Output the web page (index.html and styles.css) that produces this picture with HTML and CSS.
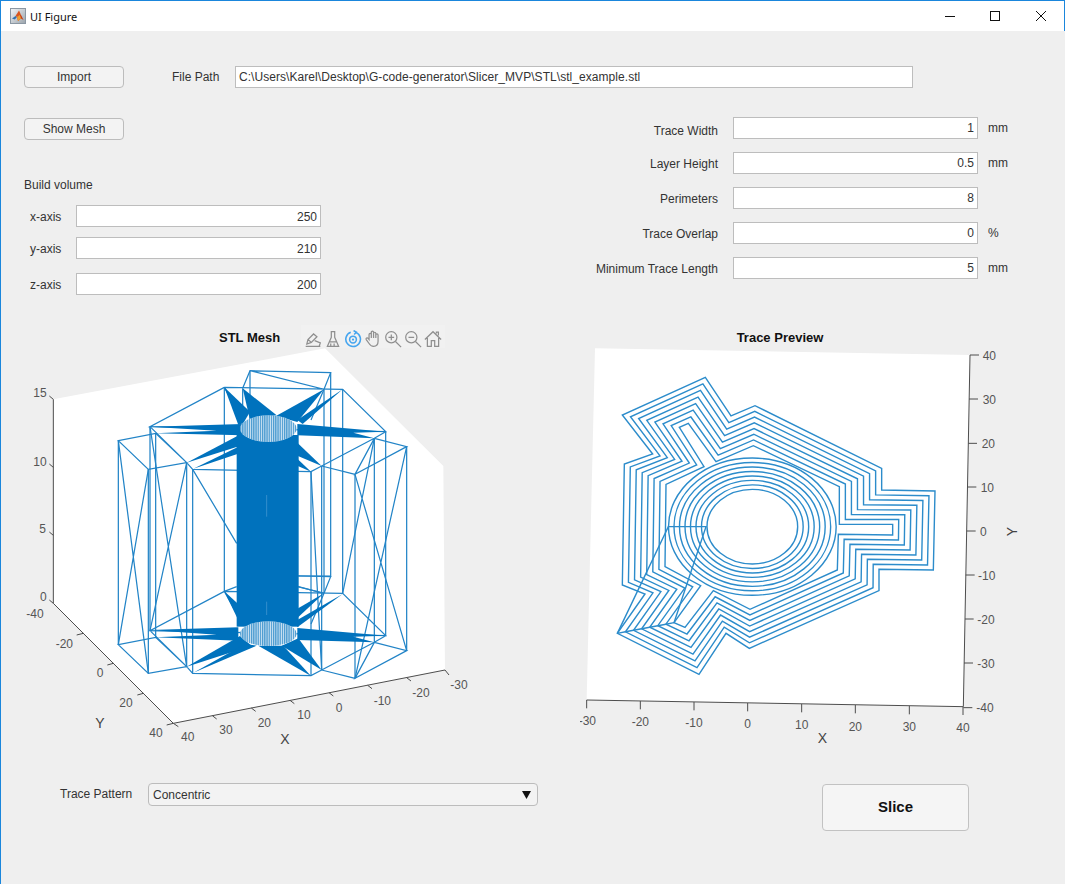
FILE: index.html
```html
<!DOCTYPE html>
<html lang="en">
<head>
<meta charset="utf-8">
<title>UI Figure</title>
<link rel="stylesheet" href="styles.css">
</head>
<body>
<div class="window">
  <header class="titlebar">
    <svg class="app-icon" viewBox="0 0 16 16">
      <defs><linearGradient id="logoBg" x1="0" y1="0" x2="1" y2="1"><stop offset="0" stop-color="#f4f6f8"/><stop offset="1" stop-color="#9aa3ab"/></linearGradient></defs>
      <rect x="0.5" y="0.5" width="15" height="15" fill="url(#logoBg)" stroke="#8b97a3"/>
      <path d="M2 10.5 5.5 8 7 9 4.8 11.5z" fill="#2f6fb0"/>
      <path d="M5.5 8 9 2.5l1.8 4-3.8 2.5z" fill="#d9541e"/>
      <path d="M9 2.5l1.8 4L13.5 12l-2.5-1.5L8 13 7 9l3.8-2.5z" fill="#c43a12"/>
      <path d="M7 9l1 4 3-2.500L10 7z" fill="#f0a030"/>
    </svg>
    <span class="title-text">UI Figure</span>
    <svg class="win-controls" viewBox="0 0 130 14" width="130" height="14">
      <path class="win-stroke" d="M15 7.500h10"/>
      <rect class="win-stroke" x="60.500" y="2.500" width="9" height="9"/>
      <path class="win-stroke" d="M106 2l10 10M116 2l-10 10"/>
    </svg>
  </header>

  <main class="content">
    <section class="file-row">
      <button class="btn">Import</button>
      <span class="label file-label">File Path</span>
      <div class="field field-left path-field">C:\Users\Karel\Desktop\G-code-generator\Slicer_MVP\STL\stl_example.stl</div>
    </section>

    <section class="settings">
      <div class="left-col">
        <button class="btn mesh-btn">Show Mesh</button>
        <div class="label volume-title">Build volume</div>
        <div class="volume-row volume-x"><span class="label axis-label">x-axis</span><div class="field volume-field">250</div></div>
        <div class="volume-row volume-y"><span class="label axis-label">y-axis</span><div class="field volume-field">210</div></div>
        <div class="volume-row volume-z"><span class="label axis-label">z-axis</span><div class="field volume-field">200</div></div>
      </div>
      <div class="params">
        <span class="label param-label param-first">Trace Width</span><div class="field">1</div><span class="label unit">mm</span>
        <span class="label param-label">Layer Height</span><div class="field">0.5</div><span class="label unit">mm</span>
        <span class="label param-label">Perimeters</span><div class="field">8</div><span class="label unit"></span>
        <span class="label param-label">Trace Overlap</span><div class="field">0</div><span class="label unit">%</span>
        <span class="label param-label">Minimum Trace Length</span><div class="field">5</div><span class="label unit">mm</span>
      </div>
    </section>

    <section class="plots">
      <figure class="plot plot-mesh">
        <figcaption class="plot-head mesh-head">
          <span class="plot-title">STL Mesh</span>
          <div class="toolbar">
            <svg class="tool" viewBox="0 0 16 16"><path d="M1.500 14.500h13M2.500 12.500l1-4 5-5 3 2.500-5 5zM3.500 8.500l3 2.500M9.500 9.500l5 2-1 3"/></svg>
            <svg class="tool" viewBox="0 0 16 16"><path d="M6.500 1.500h3v5l3.500 8h-10l3.500-8zM5 10.500h6M6 14v-2M9 14v-2"/></svg>
            <svg class="tool tool-on" viewBox="0 0 16 16"><path d="M10.500 2.100A6.500 6.500 0 1 1 6 2"/><path d="M8.500.5l2.500 1.500-2 2"/><circle cx="8" cy="8.500" r="3"/><circle class="tool-dot" cx="8" cy="8.500" r="1"/></svg>
            <svg class="tool" viewBox="0 0 16 16"><path d="M4.500 8.500V4a1 1 0 0 1 2 0v3-5a1 1 0 0 1 2 0v5-4a1 1 0 0 1 2 0v4-2.500a1 1 0 0 1 2 0V10c0 3-1.500 4.500-4 4.500-2 0-3-.800-4-2.500L2 8.500c-.700-1.200.900-2 1.700-1z"/></svg>
            <svg class="tool" viewBox="0 0 16 16"><circle cx="6.500" cy="6.500" r="5"/><path d="M10.200 10.200l5 5M4 6.500h5M6.500 4v5"/></svg>
            <svg class="tool" viewBox="0 0 16 16"><circle cx="6.500" cy="6.500" r="5"/><path d="M10.200 10.200l5 5M4 6.500h5"/></svg>
            <svg class="tool" viewBox="0 0 16 16"><path d="M.8 8.500 8 1.500l7.200 7M3 7v7.500h3.500v-5h3v5H13V7M11 3V1.800h1.800v3"/></svg>
          </div>
        </figcaption>
        <svg class="chart chart-mesh" viewBox="0 21 1380 1239">
          <defs>
            <pattern id="stripes" width="6.600" height="10" patternUnits="userSpaceOnUse"><rect width="3.800" height="10" fill="#0072bd" opacity="0.65"/></pattern>
            <g id="ringFrame">
              <path d="M690 92 932 98 912 148 690 92 668 145M613 142 968 148 1097 275 390 260 613 142M390 260 500 368 385 388 295 302 407 280 500 368M1097 275 1063 295 905 378 873 395 518 388 500 368M1063 295 1005 403 1160 320 1063 295M905 378 1005 403M912 148 873 240M613 142 668 240"/>
            </g>
          </defs>
          <polygon class="pane" points="100,178 915,25 1270,378 1275,990 460,1150 100,790"/>
          <g class="wire">
            <use href="#ringFrame"/>
            <use href="#ringFrame" y="612"/>
            <path d="M690 92V704M932 98V710M668 145V757M613 142V754M912 148V760M968 148V760M390 260V872M1097 275V887M295 302V914M1160 320V932M407 280V892M1063 295V907M500 368V980M905 378V990M385 388V1000M1005 403V1015M518 388V1000M873 395V1007"/>
            <path d="M295 302 385 1000M385 388 295 914M390 260 500 980M500 368 390 872M1160 320 1005 1015M1005 403 1160 932M518 388 650 610M1063 295 968 760M873 395 905 990M835 708H932M613 754 650 740M835 740 912 760"/>
          </g>
          <g class="solid">
            <polygon points="613,142 690,215 670,250 655,255"/>
            <polygon points="668,145 770,226 690,240"/>
            <polygon points="912,148 768,228 832,246"/>
            <polygon points="968,148 832,240 848,252"/>
            <polygon points="390,260 668,252 668,286 405,280 590,272"/>
            <polygon points="832,252 1097,275 1000,278 1063,295 832,286"/>
            <polygon points="500,368 652,288 652,320"/>
            <polygon points="520,386 652,322 652,342"/>
            <polygon points="905,378 832,308 832,347"/>
            <polygon points="873,395 832,356 832,377"/>
            <rect x="650" y="285" width="186" height="575"/>
            <polygon points="390,870 655,862 655,902 405,892 590,884"/>
            <polygon points="613,754 652,790 652,835"/>
            <polygon points="500,980 660,888 695,917"/>
            <polygon points="520,998 675,912 710,917"/>
            <polygon points="905,990 835,895 785,917"/>
            <polygon points="873,1008 715,917 790,917"/>
            <polygon points="912,760 832,806 832,834"/>
            <polygon points="968,762 832,840 832,862"/>
            <polygon points="832,864 1097,887 1000,890 1063,907 832,900"/>
          </g>
          <path class="slit" d="M740 465V530M740 785V825"/>
          <ellipse class="disc" cx="745" cy="266" rx="85" ry="40"/>
          <ellipse class="stripe" cx="745" cy="266" rx="85" ry="40"/>
          <ellipse class="disc" cx="745" cy="881" rx="85" ry="37"/>
          <ellipse class="stripe" cx="745" cy="881" rx="85" ry="37"/>
          <path class="axis" d="M100 178V790L460 1150 1275 990M100 178 88 168M100 382 88 372M100 586 88 576M100 790 88 780M190 880 170 885M280 970 262 975M370 1060 352 1065M460 1150 440 1155M460 1150 475 1160M577 1127 590 1137M694 1104 707 1114M810 1081 823 1091M927 1058 940 1068M1043 1036 1056 1046M1160 1013 1173 1023M1275 990 1287 1005"/>
          <g class="ticks">
            <text x="60" y="160">15</text><text x="60" y="365">10</text><text x="68" y="568">5</text><text x="70" y="772">0</text>
            <text x="45" y="823">-40</text><text x="133" y="912">-20</text><text x="240" y="1000">0</text><text x="318" y="1088">20</text><text x="408" y="1178">40</text>
            <text x="503" y="1192">40</text><text x="618" y="1170">30</text><text x="733" y="1150">20</text><text x="852" y="1126">10</text><text x="957" y="1103">0</text><text x="1087" y="1082">-10</text><text x="1203" y="1058">-20</text><text x="1317" y="1035">-30</text>
          </g>
          <text class="axis-name" x="240" y="1148">Y</text>
          <text class="axis-name" x="795" y="1197">X</text>
        </svg>
      </figure>

      <figure class="plot plot-trace">
        <figcaption class="plot-head trace-head"><span class="plot-title">Trace Preview</span></figcaption>
        <svg class="chart chart-trace" viewBox="0 21 1350 1209">
          <polygon class="pane" points="45,25 1170,45 1150,1100 20,1080"/>
          <g class="wire trace-lines" id="traceRings">
            <ellipse cx="517" cy="560" rx="136" ry="112"/>
            <ellipse cx="517" cy="560" rx="152.500" ry="125.400"/>
            <ellipse cx="517" cy="560" rx="169" ry="138.800"/>
            <ellipse cx="517" cy="560" rx="185.500" ry="152.200"/>
            <ellipse cx="517" cy="560" rx="202" ry="165.600"/>
            <ellipse cx="517" cy="560" rx="218.500" ry="179"/>
            <ellipse cx="517" cy="560" rx="235" ry="192.400"/>
            <ellipse cx="517" cy="560" rx="251.500" ry="205.800"/>
            <path d="M112 880 265 560H378L282 848"/>
          </g>
          <path class="axis" d="M1170 45 1150 1100 20 1080M1170 45H1197M1167 177H1194M1165 310H1191M1162 441H1189M1160 573H1187M1157 705H1184M1155 837H1181M1152 969H1179M1150 1103H1177M20 1080V1105M181 1083V1108M342 1086V1111M503 1089V1114M665 1092V1117M826 1095V1120M988 1098V1123M1149 1100V1125"/>
          <g class="ticks">
            <text x="1228" y="47">40</text><text x="1228" y="180">30</text><text x="1225" y="312">20</text><text x="1222" y="443">10</text><text x="1210" y="575">0</text><text x="1220" y="707">-10</text><text x="1218" y="840">-20</text><text x="1218" y="972">-30</text><text x="1215" y="1104">-40</text>
            <text x="22" y="1142">-30</text><text x="181" y="1147">-20</text><text x="342" y="1150">-10</text><text x="503" y="1152">0</text><text x="665" y="1156">10</text><text x="826" y="1160">20</text><text x="988" y="1161">30</text><text x="1149" y="1164">40</text>
          </g>
          <text class="axis-name" x="727" y="1195">X</text>
          <text class="axis-name" transform="translate(1295 575) rotate(-90)">Y</text>
        </svg>
      </figure>
    </section>

    <section class="bottom-row">
      <span class="label pattern-label">Trace Pattern</span>
      <div class="dropdown"><span>Concentric</span><svg class="caret" viewBox="0 0 9 8"><path d="M0 0h9L4.500 8z"/></svg></div>
      <button class="btn slice-btn">Slice</button>
    </section>
  </main>
</div>
<script src="app.js"></script>
</body>
</html>
```
FILE: styles.css
```css
* { box-sizing: border-box; }
html, body { margin: 0; padding: 0; }
body { background: #efefef; font-family: "Liberation Sans", Arial, sans-serif; font-size: 12px; color: #333; }

.window { width: 1065px; height: 884px; border-left: 1px solid #1a86dc; background: #efefef; overflow: hidden; }

.titlebar { display: flex; align-items: center; height: 31px; background: #fff; border-top: 1px solid #1a86dc; border-right: 1px solid #1a86dc; padding-left: 9px; }
.app-icon { width: 16px; height: 16px; flex: none; }
.title-text { margin-left: 4px; font-family: "Noto Sans", sans-serif; font-size: 11px; color: #111; }
.win-controls { margin-left: auto; margin-right: 4px; }
.win-stroke { fill: none; stroke: #111; stroke-width: 1; }

.content { padding-top: 35px; }

.label { color: #333; line-height: 22px; white-space: nowrap; }
.btn { display: block; width: 100px; height: 22px; padding: 0; background: #f3f3f3; border: 1px solid #bcbcbc; border-radius: 4px; font: 12px "Liberation Sans", Arial, sans-serif; color: #333; }
.field { height: 22px; background: #fff; border: 1px solid #bdbdbd; padding: 0 3px; line-height: 21px; text-align: right; color: #333; white-space: nowrap; }
.field-left { text-align: left; }

.file-row { display: flex; margin-left: 23px; }
.file-label { margin-left: 48px; width: 48px; }
.path-field { width: 678px; margin-left: 15px; letter-spacing: 0.055px; }

.settings { display: flex; margin-top: 29px; height: 178px; }
.left-col { margin-left: 23px; width: 298px; }
.mesh-btn { margin-top: 1px; }
.volume-title { margin-top: 34px; height: 22px; }
.volume-row { display: flex; height: 22px; }
.volume-row .field { line-height: 23px; }
.volume-x { margin-top: 9px; }
.volume-y { margin-top: 10px; }
.volume-z { margin-top: 14px; }
.axis-label { width: 52px; height: 22px; padding-left: 6px; line-height: 24px; }
.volume-field { width: 245px; }

.params { display: grid; grid-template-columns: 128px 245px 60px; grid-auto-rows: 22px; column-gap: 15px; row-gap: 13px; margin-left: 268px; }
.unit { margin-left: -5px; }
.param-label { height: 22px; text-align: right; line-height: 24px; }
.param-first { line-height: 28px; }

.plots { display: flex; margin-top: 30px; }
.plot { margin: 0; }
.plot-mesh { margin-left: 19px; width: 560px; }
.plot-trace { width: 450px; }
.plot-head { height: 22px; }
.mesh-head { display: flex; padding-left: 199px; }
.trace-head { width: 400px; text-align: center; }
.plot-title { display: inline-block; padding-top: 6px; font-weight: bold; font-size: 13px; line-height: 14px; color: #111; }
.toolbar { display: flex; gap: 2px; height: 23px; margin-left: 21px; padding: 5px 3px 0; background: #f1f1f1; }
.tool { width: 18px; height: 18px; fill: none; stroke: #8f8f8f; stroke-width: 1.100; }
.tool-on { stroke: #45a5ef; stroke-width: 1.400; }
.tool-dot { fill: #45a5ef; stroke: none; }

.chart { display: block; }
.chart-mesh { width: 460px; height: 413px; }
.chart-trace { width: 450px; height: 403px; }
.pane { fill: #fff; }
.wire { fill: none; stroke: #2284c7; stroke-width: 3.700; stroke-linejoin: miter; }
.trace-lines { stroke: #2c8ccb; stroke-width: 4.200; }
.solid { fill: #0072bd; }
.slit { fill: none; stroke: #4f9fd4; stroke-width: 2; }
.disc { fill: #d3e6f4; }
.stripe { fill: url(#stripes); }
.axis { fill: none; stroke: #4d4d4d; stroke-width: 3; }
.ticks text { font-size: 36px; fill: #555; text-anchor: middle; dominant-baseline: central; }
.axis-name { font-size: 42px; fill: #444; text-anchor: middle; dominant-baseline: central; }

.bottom-row { display: flex; align-items: flex-start; margin-top: 23px; }
.pattern-label { margin-left: 59px; width: 74px; }
.dropdown { display: flex; align-items: center; justify-content: space-between; width: 390px; height: 23px; margin-left: 14px; padding: 0 6px 0 4px; background: #f3f3f3; border: 1px solid #bcbcbc; border-radius: 4px; color: #333; }
.caret { width: 9px; height: 8px; fill: #111; }
.slice-btn { width: 147px; height: 47px; margin-left: 284px; margin-top: 1px; padding-bottom: 2px; background: #f5f5f5; border-color: #c2c2c2; font-size: 15px; font-weight: bold; color: #111; }
```
FILE: app.js
```js
// Perimeter traces: eight offset rings interpolated between the outer wall and the innermost wall.
var outer = [[376,112],[453,228],[525,197],[905,385],[905,450],[1065,453],[1060,690],[897,688],[897,752],[508,925],[438,880],[357,1003],[112,880],[195,762],[127,735],[133,372],[218,342],[127,225]];
var inner = [[325,250],[408,365],[520,317],[778,440],[778,553],[938,553],[938,585],[775,583],[772,690],[510,808],[400,752],[315,862],[282,848],[362,737],[255,680],[258,433],[372,380],[298,262]];
var group = document.getElementById('traceRings');
var SVG = 'http://www.w3.org/2000/svg';
var starts = [];
for (var r = 0; r < 8; r++) {
  var t = r / 7;
  var pts = outer.map(function (p, i) {
    return [p[0] + (inner[i][0] - p[0]) * t, p[1] + (inner[i][1] - p[1]) * t];
  });
  starts.push(pts[12]);
  var path = document.createElementNS(SVG, 'polygon');
  path.setAttribute('points', pts.map(function (p) { return p[0].toFixed(1) + ',' + p[1].toFixed(1); }).join(' '));
  group.appendChild(path);
}
var chain = document.createElementNS(SVG, 'polyline');
chain.setAttribute('points', starts.map(function (p) { return p[0].toFixed(1) + ',' + p[1].toFixed(1); }).join(' '));
group.appendChild(chain);
```
